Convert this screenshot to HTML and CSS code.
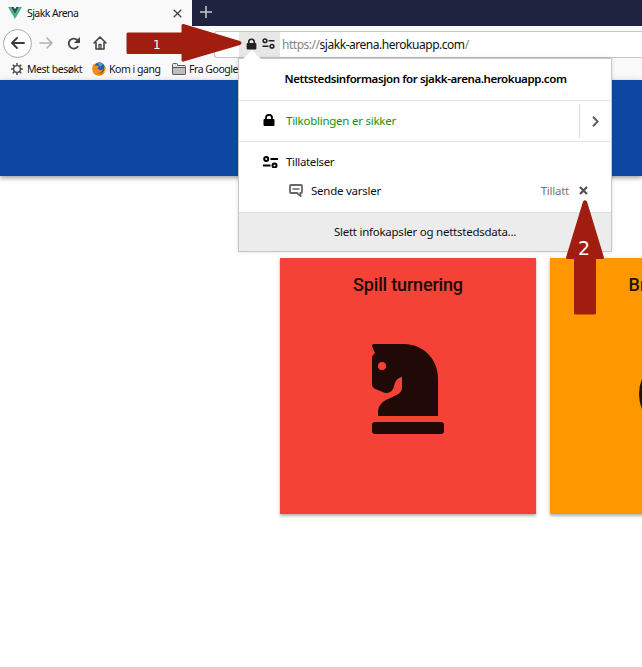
FILE: index.html
```html
<!DOCTYPE html>
<html lang="nb">
<head>
<meta charset="utf-8">
<title>Sjakk Arena</title>
<link rel="stylesheet" href="styles.css">
</head>
<body>
<div class="window">
  <header class="chrome">
    <div class="tabs">
      <div class="tab">
        <svg class="vue" viewBox="0 0 14 12"><path fill="#41b883" d="M0 0h3l4 7 4-7h3L7 12z"/><path fill="#35495e" d="M3 0h2.700L7 2.300 8.300 0H11L7 7z"/></svg>
        <span class="tab-title">Sjakk Arena</span>
        <svg class="tab-close" viewBox="0 0 9 9"><path d="M.7.7l7.600 7.600M8.300.7L.7 8.300" stroke="#444" stroke-width="1.300"/></svg>
      </div>
      <svg class="new-tab" viewBox="0 0 12 12"><path d="M6 0v12M0 6h12" stroke="#c8c9d1" stroke-width="1.500"/></svg>
    </div>
    <nav class="toolbar">
      <span class="back"><svg width="14" height="12" viewBox="0 0 14 12" fill="none" stroke="#3b3b3d" stroke-width="1.800" stroke-linecap="round" stroke-linejoin="round"><path d="M13 6H1.500M6 1L1 6l5 5"/></svg></span>
      <svg class="forward" viewBox="0 0 14 12" fill="none" stroke="#b2b2b3" stroke-width="1.600" stroke-linecap="round" stroke-linejoin="round"><path d="M1 6h11.500M8 1l5 5-5 5"/></svg>
      <svg class="reload" viewBox="0 0 14 13" fill="none"><path d="M10.700 9.700A5 5 0 1 1 10.300 3" stroke="#444" stroke-width="1.800" stroke-linecap="round"/><path d="M13 0v6H7z" fill="#444"/></svg>
      <svg class="home" viewBox="0 0 14 14" fill="none" stroke="#444" stroke-width="1.600" stroke-linejoin="round" stroke-linecap="round"><path d="M1 7l6-6 6 6M3 6.500V13h8V6.500"/><path d="M6 13V8.500h2V13" stroke-width="1.300"/></svg>
      <div class="urlbar">
        <div class="identity">
          <svg class="lock" viewBox="0 0 12 12"><path d="M3 6V3.800a3 3 0 0 1 6 0V6" fill="none" stroke="#222" stroke-width="1.800"/><rect x=".7" y="5" width="10.600" height="7" rx="1" fill="#222"/></svg>
          <svg class="perm" viewBox="0 0 14 12" fill="none" stroke="#222" stroke-width="1.700"><circle cx="3.200" cy="3" r="2"/><path d="M7 3h6.500M.5 9H7"/><circle cx="10.800" cy="9" r="2"/></svg>
        </div>
        <span class="url"><i>https://</i>sjakk-arena.herokuapp.com<i>/</i></span>
      </div>
    </nav>
    <div class="bookmarks">
      <svg class="gear" viewBox="0 0 12 12" fill="none" stroke="#4b4b4b"><circle cx="6" cy="6" r="3.400" stroke-width="1.400"/><path stroke-width="1.500" d="M6 0v2.400M6 9.600V12M0 6h2.400M9.600 6H12M1.800 1.800l1.600 1.600M8.600 8.600l1.600 1.600M1.800 10.200l1.600-1.600M8.600 3.400l1.600-1.600"/></svg>
      <span class="bm bm-most">Mest besøkt</span>
      <svg class="fox" viewBox="0 0 14 14"><circle cx="7" cy="7" r="6.500" fill="#e66000"/><circle cx="7.600" cy="5.600" r="5" fill="#1c62ae"/><path d="M6 1q3-1 5 1l-3 3z" fill="#43a5db"/><path d="M1 2l2 1.500q3-.5 4 1L5.500 6.500l3 2L11 7q-1 4-5 4l3 1.500q4-2 4-7.500Q14.500 12 8 13.500 0 14 .5 6z" fill="#f58a1d"/><path d="M12.200 4q1.600 5-2 8l3-2.500q1.200-3-1-5.500" fill="#ffd13b"/></svg>
      <span class="bm bm-start">Kom i gang</span>
      <svg class="folder" viewBox="0 0 14 12" stroke="#5b5b5b"><path fill="#e2e2e2" d="M.5 10.500v-9q0-1 1-1h3q1 0 1 1v1h7q1 0 1 1v7q0 1-1 1h-11q-1 0-1-1z"/><path fill="#bdbdbd" d="M.5 4.500h13v6q0 1-1 1h-11q-1 0-1-1z"/></svg>
      <span class="bm bm-google">Fra Google</span>
    </div>
  </header>
  <main class="page">
    <div class="appbar"></div>
    <div class="cards">
      <section class="card red">
        <h2>Spill turnering</h2>
        <svg class="knight" viewBox="0 0 216 270" fill="#210907"><path fill-rule="evenodd" d="M5 0H96C154 0 198 46 198 103V216H18V205C18 188 28 175 42 168L78 151C86 146 90 140 90 130V98C80 101 72 107 69 116L64 133Q61 141 54 144L46 147Q40 148 34 145L8 134Q0 130 0 123V41Q0 35 4 32L9 27 1 10Q-2 1 5 0zM30 54a12 12 0 1 0 0 24 12 12 0 0 0 0-24z"/><rect y="234" width="216" height="36" rx="9"/></svg>
      </section>
      <section class="card orange">
        <h2>Brukerguide</h2>
        <svg class="ring" viewBox="0 0 78 78"><circle cx="39" cy="39" r="35" fill="none" stroke="#211400" stroke-width="8"/></svg>
      </section>
    </div>
  </main>
  <aside class="popup">
    <svg class="pointer" viewBox="0 0 18 9"><path d="M0 9L9 0l9 9z" fill="#fff"/></svg>
    <div class="popup-head"><span>Nettstedsinformasjon for sjakk-arena.herokuapp.com</span></div>
    <div class="secure">
      <svg class="lock" viewBox="0 0 12 12"><path d="M3 6V3.800a3 3 0 0 1 6 0V6" fill="none" stroke="#000" stroke-width="1.800"/><rect x=".5" y="5" width="11" height="7" rx="1"/></svg>
      <span class="secure-text">Tilkoblingen er sikker</span>
      <span class="more"><svg width="7" height="11" viewBox="0 0 7 11" fill="none" stroke="#5f5f5f" stroke-width="2"><path d="M1 .8l4.700 4.700L1 10.200"/></svg></span>
    </div>
    <div class="permissions">
      <div class="perm-head">
        <svg class="perm" viewBox="0 0 15 12" fill="none" stroke="#000" stroke-width="2"><circle cx="3.200" cy="3" r="2"/><path d="M7.500 3H15M0 9.500h7.500"/><circle cx="11.500" cy="9.500" r="2"/></svg>
        <span class="perm-title">Tillatelser</span>
      </div>
      <div class="perm-row">
        <svg class="bubble" viewBox="0 0 14 13"><path d="M2 1h10q1 0 1 1v6q0 1-1 1h-.5v3L8 9H2Q1 9 1 8V2q0-1 1-1z" fill="none" stroke="#666" stroke-width="1.800"/><path d="M3.500 5h7" stroke="#888" stroke-width="2"/></svg>
        <span class="notify">Sende varsler</span>
        <span class="allowed">Tillatt</span>
        <svg class="remove" viewBox="0 0 9 9"><path d="M1 1l7 7M8 1L1 8" stroke="#555" stroke-width="2.300"/></svg>
      </div>
    </div>
    <div class="popup-foot"><span>Slett infokapsler og nettstedsdata...</span></div>
  </aside>
  <div class="arrow arrow-right"><svg viewBox="0 0 116 40"><path d="M2 9.500H55.500V2Q56 .8 57.500 1L114 18Q117 20 114 22L57.500 38.500Q56 39 55.500 37.500V31H2Q.5 31 .5 29.500V11Q.5 9.500 2 9.500z" fill="#a11d0f"/></svg><b>1</b></div>
  <div class="arrow arrow-up"><svg viewBox="0 0 38 115"><path d="M17 1.500Q19-.8 21 1.500L38 57.500Q38 59 36.500 59H30v54q0 1.500-1.500 1.500h-19Q8 114.500 8 113V59H1.500Q0 59 0 57.500z" fill="#a11d0f"/></svg><b>2</b></div>
</div>
</body>
</html>
```
FILE: styles.css
```css
* { box-sizing: border-box; }
body { margin: 0; background: #fff; font-family: "Noto Sans", "Open Sans", sans-serif; color: #111; }
svg { display: block; flex: none; }
span { white-space: nowrap; }
.window { position: relative; width: 642px; height: 667px; overflow: hidden; }
.chrome { height: 80px; background: #f9f9fa; }
.tabs { height: 26px; display: flex; align-items: center; background: #20233f; }
.tab { width: 192px; height: 26px; padding: 0 10px 0 8px; display: flex; align-items: center; background: #f9f9fa; }
.vue { width: 14px; height: 12px; }
.tab-title { margin-left: 5px; font-size: 10.500px; letter-spacing: -.55px; }
.tab-close { width: 9px; height: 9px; margin-left: auto; }
.new-tab { width: 12px; height: 12px; margin-left: 8px; margin-top: -2px; }
.toolbar { height: 34px; display: flex; align-items: center; padding-left: 3px; }
.back { width: 29px; height: 29px; border: 1px solid #aaa; border-radius: 50%; background: #fff; display: flex; align-items: center; justify-content: center; }
.forward { width: 14px; height: 12px; margin-left: 7px; }
.reload { width: 14px; height: 13px; margin-left: 14px; }
.home { width: 14px; height: 14px; margin-left: 12px; }
.urlbar { flex: 1; height: 27px; margin-left: 107px; margin-top: 3px; border: 1px solid #c5c5c7; border-right: 0; border-radius: 3px 0 0 3px; background: #fff; display: flex; align-items: center; padding-left: 25px; }
.identity { width: 41px; height: 25px; background: #e7e7e8; display: flex; align-items: center; gap: 5px; padding-left: 7px; margin-left: -1px; }
.lock { width: 12px; height: 12px; }
.identity .lock { width: 11px; margin-top: -2px; }
.perm { width: 14px; height: 12px; }
.identity .perm { width: 13px; height: 11px; margin-top: -2px; }
.url { margin-left: 2px; font-size: 12px; letter-spacing: -.47px; }
.url i { font-style: normal; color: #858585; }
.bookmarks { height: 20px; display: flex; align-items: center; padding-left: 11px; }
.bm { font-size: 10.500px; letter-spacing: -.46px; margin-top: -2px; }
.gear { width: 12px; height: 12px; margin-top: -2px; }
.fox { width: 14px; height: 14px; margin: -2px 0 0 10px; }
.folder { width: 14px; height: 12px; margin: -2px 0 0 11px; }
.bm-most { margin-left: 4px; width: 55px; }
.bm-start { margin-left: 3px; width: 52px; }
.bm-google { margin-left: 3px; }
.appbar { height: 96px; background: #0d47a1; box-shadow: 0 2px 4px rgba(0,0,0,.3), 0 1px 8px rgba(0,0,0,.12); }
.cards { display: flex; gap: 14px; padding: 82px 0 0 280px; width: 806px; }
.card { width: 256px; height: 256px; flex: none; display: flex; flex-direction: column; align-items: center; box-shadow: 0 2px 2px rgba(0,0,0,.2), 0 1px 5px rgba(0,0,0,.16); }
.red { background: #f44336; color: #210907; }
.orange { background: #ff9800; color: #211400; }
h2 { margin: 15px 0 0; font: 500 18px/24px Roboto, sans-serif; letter-spacing: -.18px; }
.orange h2 { letter-spacing: .15px; }
.knight { width: 72px; height: 90px; margin-top: 47px; }
.ring { width: 78px; height: 78px; margin-top: 58px; }
.popup { position: absolute; left: 238px; top: 58px; width: 374px; height: 194px; border: 1px solid #c8c8c8; background: #fff; box-shadow: 0 0 4px rgba(0,0,0,.13); font-size: 11.500px; letter-spacing: -.25px; display: flex; flex-direction: column; }
.pointer { position: absolute; left: 4px; top: -9px; width: 18px; height: 9px; }
.popup-head { height: 42px; border-bottom: 1px solid #e3e3e3; display: flex; align-items: center; justify-content: center; font-weight: 600; letter-spacing: -.4px; padding: 0 0 2px 1px; color: #000; }
.secure { height: 41px; border-bottom: 1px solid #e3e3e3; display: flex; align-items: center; padding: 0 0 0 24px; }
.secure .lock { margin-top: -2px; }
.secure-text { margin-left: 11px; margin-top: -2px; color: #12920f; }
.more { width: 32px; height: 34px; margin-left: auto; border-left: 1px solid #ddd; display: flex; align-items: center; justify-content: center; }
.permissions { height: 70px; padding-top: 12px; }
.perm-head { height: 16px; display: flex; align-items: center; padding-left: 24px; }
.perm-head .perm { width: 15px; }
.perm-title { margin-left: 8px; letter-spacing: -.35px; margin-top: -1px; }
.perm-row { height: 16px; margin-top: 12px; display: flex; align-items: center; padding: 0 23px 0 50px; }
.bubble { width: 14px; height: 13px; }
.notify { margin-left: 8px; }
.allowed { margin-left: auto; color: #777; }
.remove { width: 9px; height: 9px; margin-left: 10px; }
.popup-foot { flex: 1; border-top: 1px solid #ddd; background: #ececec; display: flex; align-items: center; justify-content: center; padding-bottom: 1px; }
.arrow { position: absolute; }
.arrow svg { width: 100%; height: 100%; }
.arrow b { position: absolute; color: #fff; font-family: "DejaVu Sans", sans-serif; font-weight: 400; }
.arrow-right { left: 126px; top: 23px; width: 116px; height: 40px; }
.arrow-right b { left: 27px; top: 15px; font-size: 12px; line-height: 14px; }
.arrow-up { left: 566px; top: 200px; width: 38px; height: 115px; }
.arrow-up b { left: 12px; top: 37px; font-size: 19px; line-height: 22px; }
```
